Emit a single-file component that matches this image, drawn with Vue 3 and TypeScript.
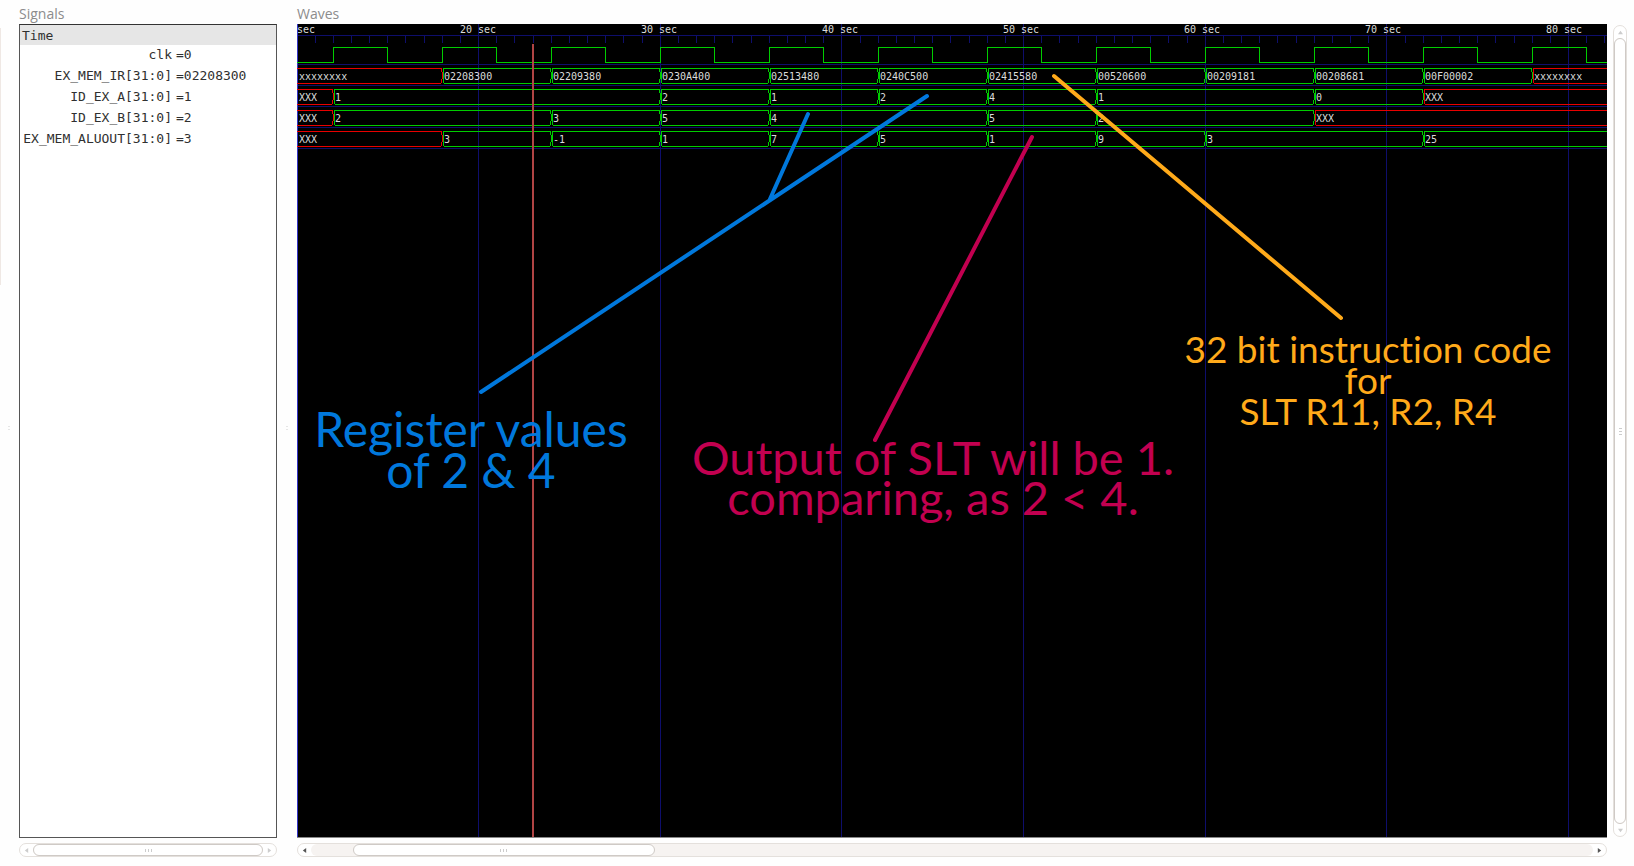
<script setup lang="ts">
interface Segment { from: number; value: string }
interface Signal { name: string; value: string; segments: Segment[] }
interface Note { color: string; size: number; x: number; lines: { text: string; y: number }[] }

const START = 10
const END = 240
const SCALE = 18.165
const px = (t: number): number => Math.floor((t - START) * SCALE)

const signals: Signal[] = [
  { name: 'clk', value: '0', segments: [] },
  {
    name: 'EX_MEM_IR[31:0]', value: '02208300', segments: [
      { from: 9, value: 'xxxxxxxx' }, { from: 18, value: '02208300' }, { from: 24, value: '02209380' },
      { from: 30, value: '0230A400' }, { from: 36, value: '02513480' }, { from: 42, value: '0240C500' },
      { from: 48, value: '02415580' }, { from: 54, value: '00520600' }, { from: 60, value: '00209181' },
      { from: 66, value: '00208681' }, { from: 72, value: '00F00002' }, { from: 78, value: 'xxxxxxxx' },
    ],
  },
  {
    name: 'ID_EX_A[31:0]', value: '1', segments: [
      { from: 9, value: 'XXX' }, { from: 12, value: '1' }, { from: 30, value: '2' }, { from: 36, value: '1' },
      { from: 42, value: '2' }, { from: 48, value: '4' }, { from: 54, value: '1' }, { from: 66, value: '0' },
      { from: 72, value: 'XXX' },
    ],
  },
  {
    name: 'ID_EX_B[31:0]', value: '2', segments: [
      { from: 9, value: 'XXX' }, { from: 12, value: '2' }, { from: 24, value: '3' }, { from: 30, value: '5' },
      { from: 36, value: '4' }, { from: 48, value: '5' }, { from: 54, value: '2' }, { from: 66, value: 'XXX' },
    ],
  },
  {
    name: 'EX_MEM_ALUOUT[31:0]', value: '3', segments: [
      { from: 9, value: 'XXX' }, { from: 18, value: '3' }, { from: 24, value: '-1' }, { from: 30, value: '1' },
      { from: 36, value: '7' }, { from: 42, value: '5' }, { from: 48, value: '1' }, { from: 54, value: '9' },
      { from: 60, value: '3' }, { from: 72, value: '25' },
    ],
  },
]

const boxes = signals.flatMap((signal, row) =>
  signal.segments.map((segment, i) => {
    const top = 23 + row * 21
    const bottom = top + 15
    const left = px(segment.from)
    const right = px(signal.segments[i + 1]?.from ?? END)
    return {
      key: `${signal.name}-${segment.from}`,
      unknown: /^x/i.test(segment.value),
      value: segment.value,
      textX: Math.max(left, 0) + 2,
      textY: top + 12,
      path: `M${left + 2} ${top}H${right - 1}L${right} ${top + 4}V${bottom - 4}L${right - 1} ${bottom}H${left + 2}L${left + 1} ${bottom - 4}V${top + 4}Z`,
    }
  }),
)

let clock = 'M0 38'
for (let t = 12; t < END; t += 6) clock += `H${px(t)}V23H${px(t + 3)}V38`

const ticks = Array.from({ length: END - START }, (_, i) => px(START + i))
const majors = Array.from({ length: 22 }, (_, i) => START + i * 10)
const labels = [20, 30, 40, 50, 60, 70, 80].map((t, i) => ({ text: `${t} sec`, x: 163 + i * 181 }))

const notes: Note[] = [
  { color: 'blue', size: 48, x: 174, lines: [{ text: 'Register values', y: 423 }, { text: 'of 2 & 4', y: 464 }] },
  { color: 'pink', size: 47, x: 636, lines: [{ text: 'Output of SLT will be 1.', y: 451 }, { text: 'comparing, as 2 < 4.', y: 491 }] },
  { color: 'orange', size: 37, x: 1071, lines: [{ text: '32 bit instruction code', y: 339 }, { text: 'for', y: 370 }, { text: 'SLT R11, R2, R4', y: 401 }] },
]
</script>

<template>
  <main class="viewer">
    <span class="edge" aria-hidden="true"></span>
    <span class="grip" aria-hidden="true"></span>
    <section class="pane signals">
      <h2>Signals</h2>
      <div class="list">
        <table>
          <thead><tr><th colspan="2">Time</th></tr></thead>
          <tbody>
            <tr v-for="signal in signals" :key="signal.name">
              <td class="name">{{ signal.name }}</td>
              <td class="value">={{ signal.value }}</td>
            </tr>
          </tbody>
        </table>
      </div>
      <div class="bar">
        <button type="button" class="dim" aria-label="Scroll signals left"><svg viewBox="0 0 6 6"><path d="M5 0V6L1 3Z" /></svg></button>
        <div class="trough"><div class="thumb full"><i></i><i></i><i></i></div></div>
        <button type="button" class="dim" aria-label="Scroll signals right"><svg viewBox="0 0 6 6"><path d="M1 0V6L5 3Z" /></svg></button>
      </div>
    </section>
    <span class="grip" aria-hidden="true"></span>
    <section class="pane waves">
      <h2>Waves</h2>
      <div class="canvas">
        <svg class="plot" role="img" aria-label="Signal waveforms">
          <g class="grid">
            <line v-for="t in majors" :key="t" :x1="px(t)" :x2="px(t)" y1="0" y2="100%" />
            <line x1="0" x2="100%" y1="11" y2="11" />
            <line v-for="x in ticks" :key="x" :x1="x" :x2="x" y1="11" y2="19" />
            <line v-for="(signal, i) in signals" :key="signal.name" x1="0" x2="100%" :y1="40 + i * 21" :y2="40 + i * 21" />
          </g>
          <line class="origin" x1="0" x2="0" y1="0" y2="100%" />
          <text x="0" y="9">sec</text>
          <text v-for="label in labels" :key="label.text" :x="label.x" y="9">{{ label.text }}</text>
          <path class="trace" :d="clock" />
          <path v-for="box in boxes" :key="box.key" class="trace" :class="{ unknown: box.unknown }" :d="box.path" />
          <text v-for="box in boxes" :key="box.key" :x="box.textX" :y="box.textY">{{ box.value }}</text>
          <line class="cursor" x1="236" x2="236" y1="20" y2="100%" />
          <path class="pointer blue" d="M184 368L630 72M473 175L511 90" />
          <path class="pointer pink" d="M578 416L735 113" />
          <path class="pointer orange" d="M757 52L1044 294" />
          <g v-for="note in notes" :key="note.color" class="note" :class="note.color" :font-size="note.size">
            <text v-for="line in note.lines" :key="line.text" :x="note.x" :y="line.y">{{ line.text }}</text>
          </g>
        </svg>
      </div>
      <div class="bar">
        <button type="button" aria-label="Scroll waves left"><svg viewBox="0 0 6 6"><path d="M5 0V6L1 3Z" /></svg></button>
        <div class="trough"><div class="thumb part"><i></i><i></i><i></i></div></div>
        <button type="button" aria-label="Scroll waves right"><svg viewBox="0 0 6 6"><path d="M1 0V6L5 3Z" /></svg></button>
      </div>
    </section>
    <div class="bar vertical">
      <button type="button" class="dim" aria-label="Scroll up"><svg viewBox="0 0 6 6"><path d="M0 5H6L3 1Z" /></svg></button>
      <div class="trough"><div class="thumb full"><i></i><i></i><i></i></div></div>
      <button type="button" class="dim" aria-label="Scroll down"><svg viewBox="0 0 6 6"><path d="M0 1H6L3 5Z" /></svg></button>
    </div>
  </main>
</template>

<style>
body { margin: 0; background: #fefefe; }
</style>

<style scoped>
.viewer {
  box-sizing: border-box;
  display: flex;
  min-height: 100vh;
  padding: 0 7px 9px 0;
  font-family: "Open Sans", "Noto Sans", sans-serif;
}
.edge { width: 1px; height: 257px; margin-top: 28px; background: #efe8e4; }
.pane { display: flex; flex-direction: column; min-width: 0; }
.signals { width: 258px; flex: none; }
.waves { flex: 1; }
h2 {
  height: 24px;
  margin: 0;
  color: #8c8c8c;
  font-size: 14px;
  font-weight: 400;
  line-height: 27px;
}
.list { flex: 1; border: 1px solid #555; border-top-color: #333; background: #fff; overflow: hidden; }
table {
  width: 100%;
  border-collapse: collapse;
  color: #303030;
  font: 13px/19px "DejaVu Sans Mono", monospace;
}
th { padding: 2px 2px 0; background: #e6e6e6; font-weight: 400; line-height: 18px; text-align: left; }
td { height: 21px; padding: 0; vertical-align: top; white-space: pre; }
.name { width: 152px; text-align: right; }
.value { padding-left: 4px; }
.grip {
  flex: none;
  width: 2px;
  height: 6px;
  margin: 0 9px;
  align-self: center;
  background: repeating-linear-gradient(#e6e6e6 0 1px, transparent 1px 3px);
}
.edge + .grip { margin: 0 9px 0 7px; }
.canvas { flex: 1; display: flex; background: #000; border-bottom: 1px solid #888; }
.plot { display: block; flex: 1; width: 100%; min-width: 0; height: auto; overflow: hidden; }
.grid line { stroke: #0e0e6c; stroke-width: 1; shape-rendering: crispEdges; }
.origin { stroke: #3434c8; stroke-width: 2; }
.plot text { fill: #dcdcdc; font-family: "DejaVu Sans Mono", monospace; font-size: 10px; }
.trace { fill: none; stroke: #00cc00; stroke-width: 1; shape-rendering: crispEdges; }
.trace.unknown { stroke: #e80000; }
.cursor { stroke: #b04444; stroke-width: 2; }
.pointer { fill: none; stroke-width: 4; stroke-linecap: round; }
.pointer.blue { stroke: #0078dc; }
.pointer.pink { stroke: #c20050; }
.pointer.orange { stroke: #ffaa1a; }
.plot .note text {
  font-family: Lato, "Open Sans", sans-serif;
  font-size: inherit;
  font-variant-ligatures: none;
  text-anchor: middle;
}
.plot .note.blue text { fill: #0078dc; }
.plot .note.pink text { fill: #c20050; }
.plot .note.orange text { fill: #ffaa1a; }
.bar {
  box-sizing: border-box;
  display: flex;
  height: 14px;
  margin-top: 5px;
  border: 1px solid #e4e0dc;
  border-radius: 7px;
  background: #fff;
}
.bar button {
  display: flex;
  align-items: center;
  justify-content: center;
  flex: none;
  width: 13px;
  height: 12px;
  padding: 0;
  border: 0;
  background: none;
  color: #555;
}
.bar button.dim { color: #ccc; }
.bar button svg { width: 5px; height: 5px; fill: currentColor; }
.trough { display: flex; flex: 1; border-radius: 7px; background: #f6f3f1; }
.thumb {
  box-sizing: border-box;
  display: flex;
  align-items: center;
  justify-content: center;
  gap: 2px;
  border: 1px solid #cfcac6;
  border-radius: 7px;
  background: #fff;
}
.thumb.full { flex: 1; }
.thumb.part { width: 23.5%; margin-left: 3.3%; }
.thumb i { width: 1px; height: 3px; background: #ccc; }
.bar.vertical { flex: none; flex-direction: column; width: 14px; height: auto; margin: 25px 0 20px 6px; }
.vertical .thumb { flex-direction: column; }
.vertical .thumb i { width: 3px; height: 1px; }
</style>
